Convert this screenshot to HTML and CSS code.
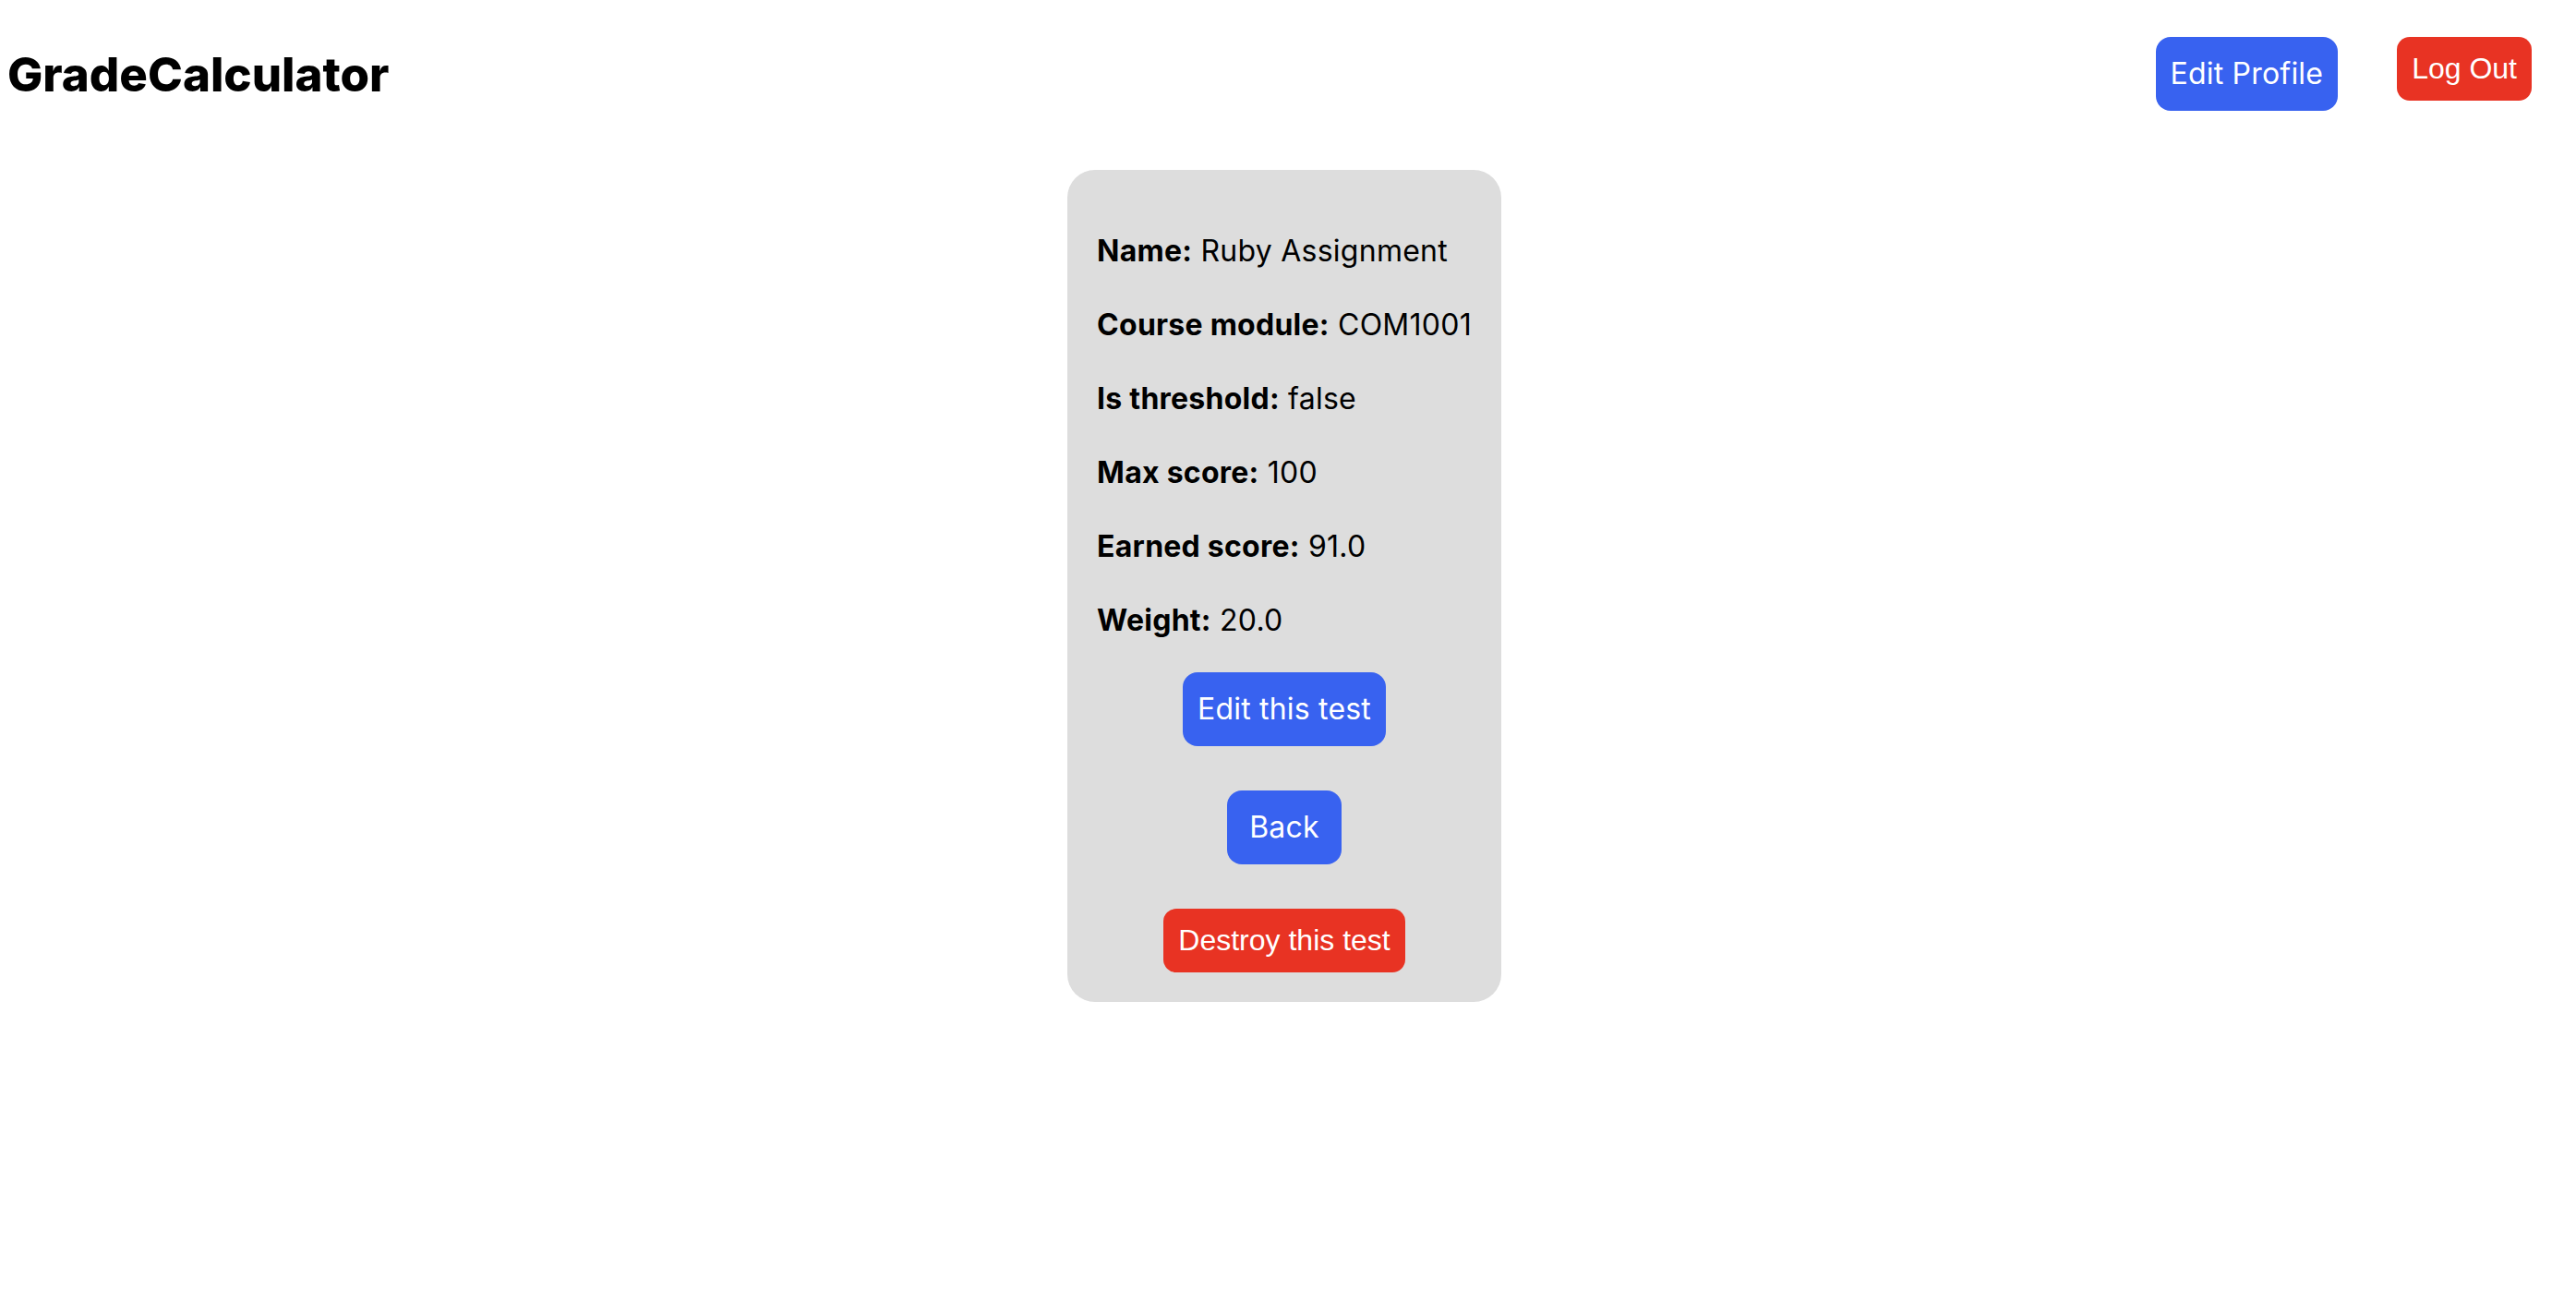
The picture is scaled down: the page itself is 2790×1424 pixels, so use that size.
FILE: index.html
```html
<!DOCTYPE html>
<html lang="en">
<head>
<meta charset="utf-8">
<title>GradeCalculator</title>
<link rel="stylesheet" href="styles.css">
</head>
<body>
<header class="topbar">
  <h1 class="brand">GradeCalculator</h1>
  <nav class="nav">
    <a class="btn btn-blue" href="#">Edit Profile</a>
    <form class="inline-form"><button type="button" class="sys-btn sys-red">Log Out</button></form>
  </nav>
</header>
<main class="main">
  <section class="card">
    <p class="field"><strong>Name:</strong> Ruby Assignment</p>
    <p class="field"><strong>Course module:</strong> COM1001</p>
    <p class="field"><strong>Is threshold:</strong> false</p>
    <p class="field"><strong>Max score:</strong> 100</p>
    <p class="field"><strong>Earned score:</strong> 91.0</p>
    <p class="field"><strong>Weight:</strong> 20.0</p>
    <div class="actions">
      <a class="btn btn-blue" href="#">Edit this test</a>
      <a class="btn btn-blue btn-wide" href="#">Back</a>
      <form class="inline-form"><button type="button" class="sys-btn sys-red">Destroy this test</button></form>
    </div>
  </section>
</main>
</body>
</html>
```
FILE: styles.css
```css
html, body {
  margin: 0;
  padding: 0;
  background: #ffffff;
}
body {
  font-family: "Inter", "Noto Sans", sans-serif;
  color: #000000;
  padding: 0 8px;
}
.topbar {
  display: flex;
  justify-content: space-between;
  align-items: flex-start;
  padding-top: 40px;
  padding-right: 40px;
}
.brand {
  margin: 0;
  padding-top: 2px;
  font-size: 51px;
  line-height: 78px;
  font-weight: 800;
  letter-spacing: 0;
}
.nav {
  display: flex;
  gap: 64px;
  align-items: flex-start;
}
.inline-form {
  margin: 0;
  display: block;
}
.btn {
  display: inline-block;
  font-size: 32px;
  line-height: 48px;
  padding: 16px;
  border-radius: 16px;
  text-decoration: none;
  color: #ffffff;
  letter-spacing: 0.2px;
}
.btn-wide {
  padding: 16px 24px;
}
.btn-blue {
  background: #3862f0;
}
.sys-btn {
  font-family: "Liberation Sans", Arial, sans-serif;
  font-size: 32px;
  line-height: 37px;
  padding: 16px;
  border: none;
  border-radius: 14px;
  color: #ffffff;
  cursor: pointer;
}
.sys-red {
  background: #e83323;
}
.main {
  display: flex;
  justify-content: center;
  padding-top: 64px;
  padding-right: 8px;
}
.card {
  background: #dddddd;
  border-radius: 30px;
  padding: 32px;
}
.field {
  margin: 32px 0;
  font-size: 32px;
  line-height: 48px;
  white-space: nowrap;
  letter-spacing: 0.25px;
}
.field strong {
  font-weight: 700;
}
.actions {
  display: flex;
  flex-direction: column;
  align-items: center;
  gap: 48px;
}
```
